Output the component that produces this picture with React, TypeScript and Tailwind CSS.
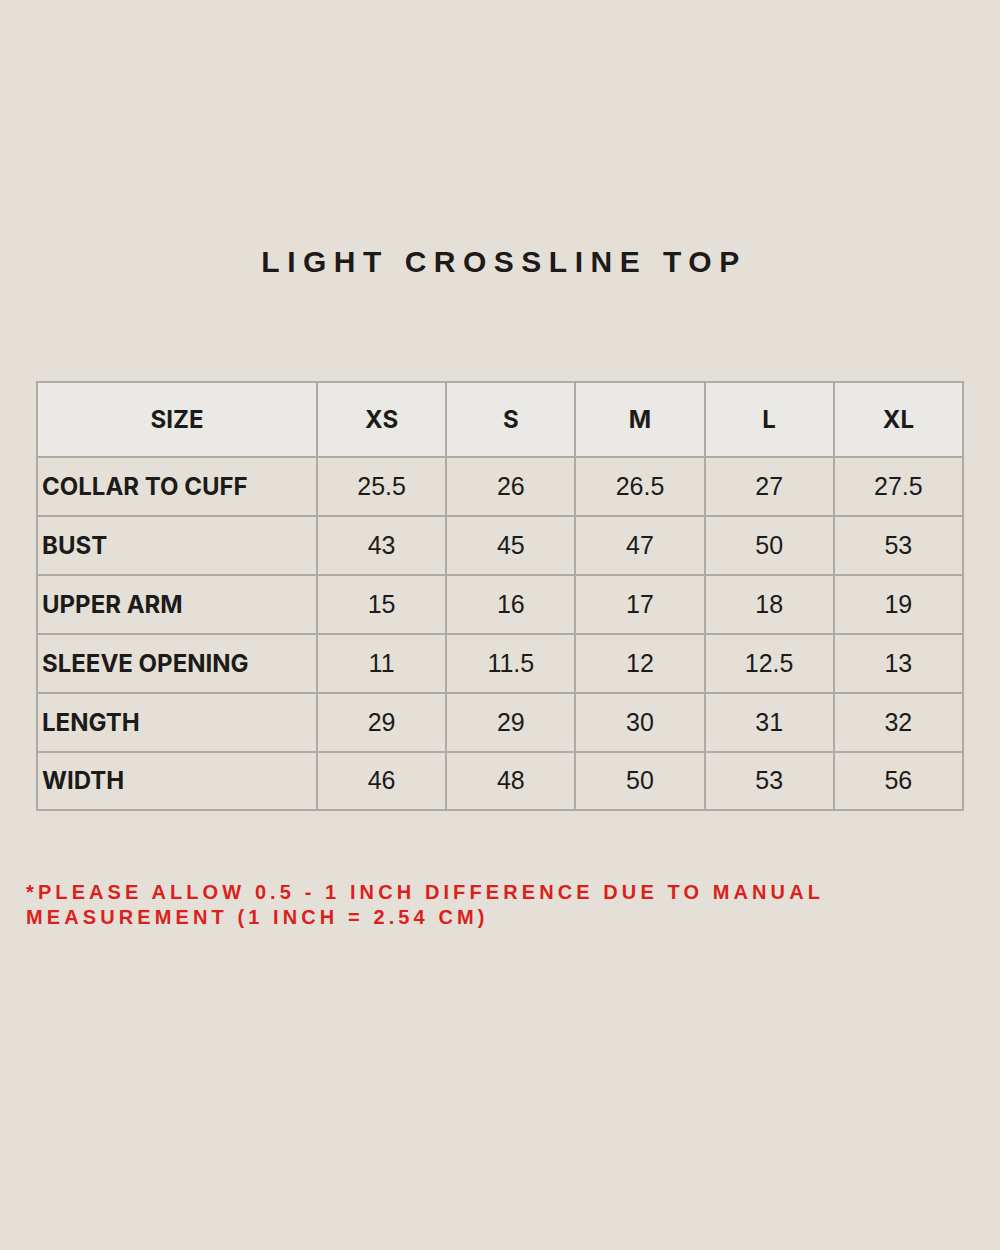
const sizes = ["XS", "S", "M", "L", "XL"];

const rows: { label: string; values: string[] }[] = [
  { label: "COLLAR TO CUFF", values: ["25.5", "26", "26.5", "27", "27.5"] },
  { label: "BUST", values: ["43", "45", "47", "50", "53"] },
  { label: "UPPER ARM", values: ["15", "16", "17", "18", "19"] },
  { label: "SLEEVE OPENING", values: ["11", "11.5", "12", "12.5", "13"] },
  { label: "LENGTH", values: ["29", "29", "30", "31", "32"] },
  { label: "WIDTH", values: ["46", "48", "50", "53", "56"] },
];

export default function App() {
  return (
    <div className="w-[1000px] h-[1250px] bg-[#e5e0d7] text-[#1c1b19] pt-[244px]">
      <h1 className="text-center text-[30px] leading-[36px] font-bold tracking-[0.25em] pl-[8px] font-['Liberation_Sans',Arial,sans-serif]">
        LIGHT CROSSLINE TOP
      </h1>

      <div className="mt-[101px] ml-[36px] w-[928px]">
        <table className="w-full border-collapse table-fixed">
          <colgroup>
            <col className="w-[280px]" />
            <col />
            <col />
            <col />
            <col />
            <col />
          </colgroup>
          <thead>
            <tr className="h-[75px] bg-[#ebe9e5]">
              <th className="border-2 border-[#aeaaa5] text-[24px] font-bold font-['Inter',sans-serif]">
                SIZE
              </th>
              {sizes.map((s) => (
                <th
                  key={s}
                  className="border-2 border-[#aeaaa5] text-[24px] font-bold font-['Inter',sans-serif]"
                >
                  {s}
                </th>
              ))}
            </tr>
          </thead>
          <tbody>
            {rows.map((r, idx) => (
              <tr key={r.label} className={idx === rows.length - 1 ? "h-[58px]" : "h-[59px]"}>
                <td className="border-2 border-[#aeaaa5] pl-[4px] text-[24px] font-bold font-['Inter',sans-serif]">
                  {r.label}
                </td>
                {r.values.map((v, i) => (
                  <td
                    key={i}
                    className="border-2 border-[#aeaaa5] text-center text-[25px] font-['Liberation_Sans',Arial,sans-serif]"
                  >
                    {v}
                  </td>
                ))}
              </tr>
            ))}
          </tbody>
        </table>
      </div>

      <p className="mt-[69px] ml-[26px] whitespace-nowrap text-[20px] leading-[25px] font-bold tracking-[0.205em] text-[#dc1f1c] font-['Liberation_Sans',Arial,sans-serif]">
        *PLEASE ALLOW 0.5 - 1 INCH DIFFERENCE DUE TO MANUAL
        <br />
        MEASUREMENT (1 INCH = 2.54 CM)
      </p>
    </div>
  );
}
